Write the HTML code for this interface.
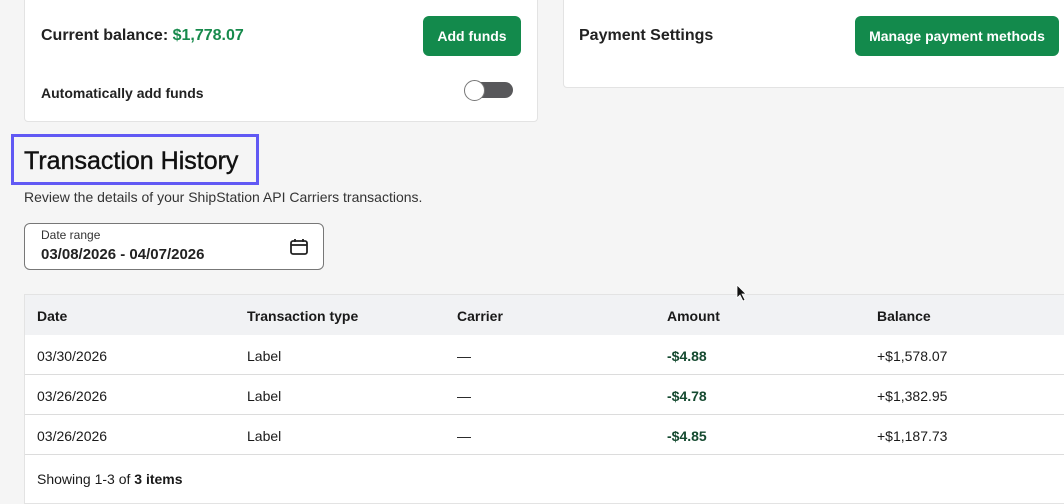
<!DOCTYPE html>
<html><head><style>
*{box-sizing:border-box;margin:0;padding:0}
body{width:1064px;height:498px;overflow:hidden;background:#f5f5f5;font-family:"Liberation Sans",sans-serif;color:#1a1a1a;position:relative}
.abs{position:absolute}
.card{position:absolute;background:#fff;border:1px solid #e3e3e3;border-radius:4px}
.btn{position:absolute;background:#138a4c;color:#fff;font-weight:bold;font-size:14px;border-radius:6px;display:flex;align-items:center;justify-content:center}
.t{position:absolute;font-size:14px;white-space:nowrap}
.row{position:absolute;left:25px;width:1045px;height:40px;background:#fff;border-bottom:1px solid #dcdcdc}
</style></head><body>
<div class="card" style="left:24px;top:-6px;width:514px;height:128px"></div>
<div class="t" style="left:41px;top:27px;font-size:16px;font-weight:bold;color:#222">Current balance: <span style="color:#178a4c">$1,778.07</span></div>
<div class="btn" style="left:423px;top:16px;width:98px;height:40px">Add funds</div>
<div class="t" style="left:41px;top:85px;font-weight:bold;color:#222">Automatically add funds</div>
<div class="abs" style="left:466px;top:82px;width:47px;height:16px;border-radius:8px;background:#58585b"></div>
<div class="abs" style="left:464px;top:80px;width:21px;height:21px;border-radius:50%;background:#fff;border:1px solid #777"></div>
<div class="card" style="left:563px;top:-6px;width:510px;height:94px"></div>
<div class="t" style="left:579px;top:27px;font-size:16px;font-weight:bold;color:#222">Payment Settings</div>
<div class="btn" style="left:855px;top:16px;width:204px;height:40px">Manage payment methods</div>
<div class="abs" style="left:11px;top:134px;width:248px;height:51px;border:3px solid #6159f4"></div>
<div class="t" style="left:24px;top:147px;font-size:25px;color:#111;-webkit-text-stroke:0.4px #111">Transaction History</div>
<div class="t" style="left:24px;top:189px;color:#333">Review the details of your ShipStation API Carriers transactions.</div>
<div class="abs" style="left:24px;top:223px;width:300px;height:47px;border:1px solid #777;border-radius:6px;background:#fff"></div>
<div class="t" style="left:41px;top:228px;font-size:12px;color:#333">Date range</div>
<div class="t" style="left:41px;top:246px;font-size:15px;font-weight:bold;color:#222">03/08/2026 - 04/07/2026</div>
<svg class="abs" style="left:289px;top:237px" width="20" height="20" viewBox="0 0 20 20"><rect x="2" y="4" width="16" height="13" rx="2" fill="none" stroke="#222" stroke-width="1.8"/><line x1="2" y1="8" x2="18" y2="8" stroke="#222" stroke-width="1.8"/><line x1="6" y1="2" x2="6" y2="5" stroke="#222" stroke-width="1.8"/><line x1="14" y1="2" x2="14" y2="5" stroke="#222" stroke-width="1.8"/></svg>
<div class="abs" style="left:24px;top:294px;width:1045px;height:210px;border:1px solid #e3e3e3;background:#fff"></div>
<div class="row" style="top:295px;background:#f1f2f4;border-bottom:none"></div>
<div class="row" style="top:335px"></div>
<div class="row" style="top:375px"></div>
<div class="row" style="top:415px"></div>
<div class="t" style="left:37px;top:308px;font-weight:bold">Date</div>
<div class="t" style="left:247px;top:308px;font-weight:bold">Transaction type</div>
<div class="t" style="left:457px;top:308px;font-weight:bold">Carrier</div>
<div class="t" style="left:667px;top:308px;font-weight:bold">Amount</div>
<div class="t" style="left:877px;top:308px;font-weight:bold">Balance</div>
<div class="t" style="left:37px;top:348px">03/30/2026</div><div class="t" style="left:247px;top:348px">Label</div><div class="t" style="left:457px;top:348px">—</div><div class="t" style="left:667px;top:348px;font-weight:bold;color:#154a30">-$4.88</div><div class="t" style="left:877px;top:348px">+$1,578.07</div>
<div class="t" style="left:37px;top:388px">03/26/2026</div><div class="t" style="left:247px;top:388px">Label</div><div class="t" style="left:457px;top:388px">—</div><div class="t" style="left:667px;top:388px;font-weight:bold;color:#154a30">-$4.78</div><div class="t" style="left:877px;top:388px">+$1,382.95</div>
<div class="t" style="left:37px;top:428px">03/26/2026</div><div class="t" style="left:247px;top:428px">Label</div><div class="t" style="left:457px;top:428px">—</div><div class="t" style="left:667px;top:428px;font-weight:bold;color:#154a30">-$4.85</div><div class="t" style="left:877px;top:428px">+$1,187.73</div>
<div class="t" style="left:37px;top:471px">Showing 1-3 of <b>3 items</b></div>
<svg class="abs" style="left:736px;top:284px" width="12" height="18" viewBox="0 0 12 18"><path d="M1 1 L1 14 L4 11 L7 17 L9 16 L6 10 L10 10 Z" fill="#111" stroke="#fff" stroke-width="0.8"/></svg>
</body></html>
